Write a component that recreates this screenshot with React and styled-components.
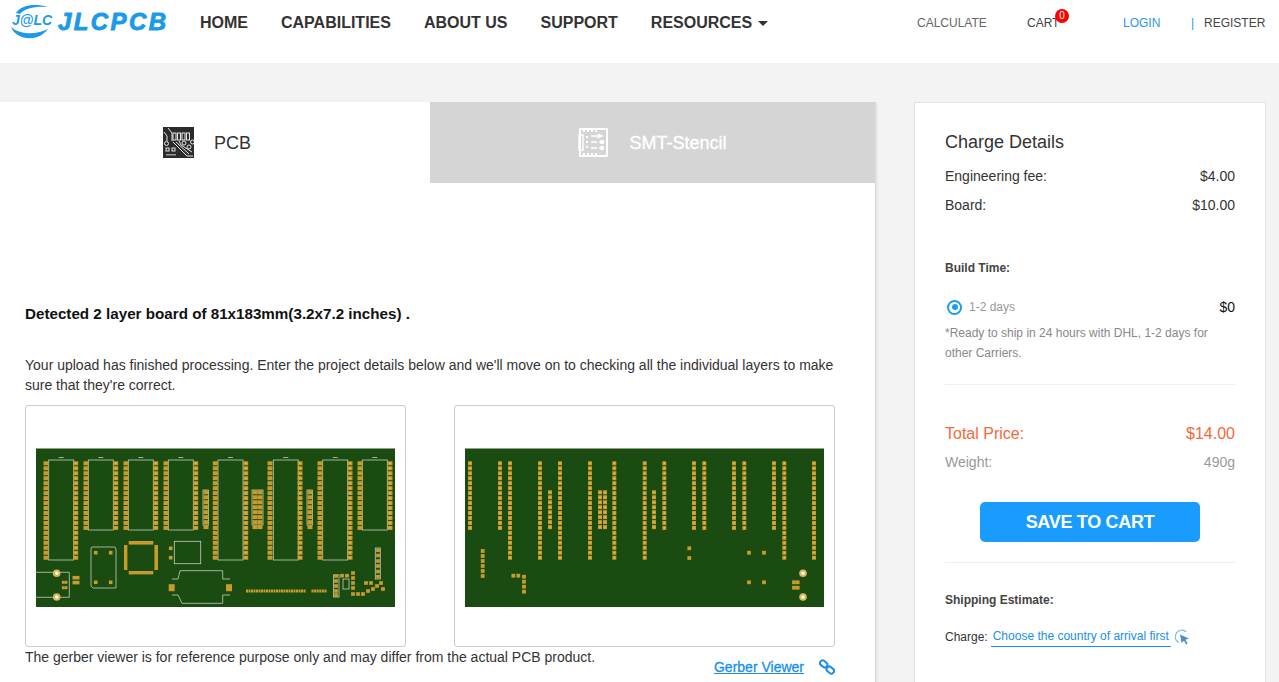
import React from "react";
import styled, { createGlobalStyle } from "styled-components";

const GlobalStyle = createGlobalStyle`
  html, body {
    margin: 0;
    height: 100%;
    overflow: hidden;
    background: #f3f3f3;
    font-family: "Liberation Sans", Arial, sans-serif;
    color: #333;
  }
`;

const range = (n) => Array.from({ length: n }, (_, i) => i);

// board drawing data, coordinates are in board pixels (359x159)
const chips = [
  { silk: 12.7, pads: [10, 39.7], rows: 20 },
  { silk: 52.3, pads: [50, 79.7], rows: 14 },
  { silk: 92.3, pads: [90, 119.7], rows: 14 },
  { silk: 132.3, pads: [130, 159.7], rows: 14 },
  { silk: 182, pads: [179.3, 209.7], rows: 20 },
  { silk: 237.3, pads: [234, 264], rows: 20 },
  { silk: 286.7, pads: [284, 314], rows: 20 },
  { silk: 326.3, pads: [324, 354], rows: 14 },
];
const strips = [170, 219, 224, 274];

const Pad = ({ x, y, w = 5, h = 4, hole }) => (
  <g>
    <rect x={x - w / 2} y={y - h / 2} width={w} height={h} fill="#c99b2c" />
    {hole && <rect x={x - 0.5} y={y - 0.5} width={1} height={1} fill="#efe2a8" />}
  </g>
);

const Mount = ({ x, y }) => (
  <g>
    <circle cx={x} cy={y} r={3.8} fill="#d9b75a" />
    <circle cx={x} cy={y} r={1.7} fill="#fff" />
  </g>
);

const Column = ({ x, rows, start = 15.3, w, h, hole }) =>
  range(rows).map((i) => <Pad key={i} x={x} y={start + i * 4.97} w={w} h={h} hole={hole} />);

const Silk = styled.g`
  fill: none;
  stroke: #c6cdc0;
  stroke-width: 0.8;
`;

const boardPads = [
  [300, 128], [300, 133], [300, 138], [300, 143], [300, 147],
  [306, 127.7], [311, 127.7], [317, 125], [317, 130], [317, 135], [317, 140], [317, 146],
  [322, 146], [327, 146], [332, 143], [337, 141], [330, 135], [335, 135], [341, 138], [345, 135],
  [347, 141], [342, 128.7], [342, 123.5], [342, 118], [342, 113], [342, 107.5], [342, 102.3],
];

const BoardBase = ({ children }) => (
  <svg width="359" height="159" viewBox="0 0 359 159" style={{ display: "block" }}>
    <rect width="359" height="159" fill="#1a4b11" />
    <rect width="359" height="1" fill="#8da386" />
    {children}
  </svg>
);

const TopBoard = () => (
  <BoardBase>
    <Silk>
      {chips.map((c) => (
        <rect key={c.silk} x={c.silk} y={12} width={25} height={c.rows === 20 ? 100 : 70} />
      ))}
      <rect x={167} y={42} width={5.5} height={35} />
      <rect x={216} y={42} width={11} height={35} />
      <rect x={271} y={42} width={5.5} height={35} />
      <path d="M56 99H79L80 101V140H57L55 138V100Z" />
      <rect x={138.3} y={93.3} width={26.4} height={22.4} />
      <path d="M0 124.3H33.3V149.3H0" />
      <path d="M136 131H142L144 122.7H186.7V131H194" />
      <path d="M136 147H142L146 155.3H186.7V147H194" />
      <rect x={297.5} y={127} width={5.5} height={22} />
      <rect x={339.3} y={100} width={5} height={31} />
      <rect x={307} y={131} width={6} height={10} />
      {chips.map((c) => <path key={c.silk} d={`M${c.silk + 10} 9.5h5`} />)}
    </Silk>
    {chips.map((c) =>
      c.pads.map((x, side) => (
        <Column key={x} x={x} rows={c.rows} hole={side === 0 ? false : true} />
      ))
    )}
    {strips.map((x) => (
      <Column key={x} x={x} rows={8} start={44.3} />
    ))}
    <rect x={92.7} y={93} width={24.6} height={3.6} fill="#c99b2c" />
    <rect x={92.7} y={123} width={24.6} height={3.4} fill="#c99b2c" />
    <rect x={88} y={97} width={3.4} height={25} fill="#c99b2c" />
    <rect x={118.4} y={97} width={3.6} height={25} fill="#c99b2c" />
    {[[59.7, 104.7], [74.7, 104.7], [59.7, 134.3], [74.7, 134.3], [134.7, 100.3], [134.7, 109.7]].map(([x, y]) => (
      <Pad key={`${x}-${y}`} x={x} y={y} w={3.6} h={3.6} />
    ))}
    <Mount x={20.7} y={125.3} />
    <Mount x={20.7} y={149} />
    {[[27.3, 134.3], [30, 134.3], [27.3, 139.7], [30, 139.7]].map(([x, y]) => (
      <Pad key={`${x}-${y}`} x={x} y={y} w={2.8} h={3} />
    ))}
    <Pad x={40} y={129.7} w={7} h={3.6} />
    <Pad x={40} y={134.6} w={7} h={3.6} />
    <Pad x={135.7} y={139.7} w={6} h={7} />
    <Pad x={193} y={139.7} w={6} h={7} />
    {range(24).map((i) => <Pad key={i} x={211 + i * 2.5} y={143} w={2} h={3} />)}
    {range(6).map((i) => <Pad key={i} x={276.5 + i * 2.6} y={143} w={2.1} h={3} />)}
    {boardPads.map(([x, y]) => <Pad key={`${x}-${y}`} x={x} y={y} w={3.8} h={3.6} />)}
  </BoardBase>
);

const backPads = [
  ...range(6).map((i) => [17.7, 103 + i * 5]),
  [48.3, 127.7], [53.3, 127.7],
  ...range(4).map((i) => [59, 128.7 + i * 5]),
  [224.3, 100.3], [224.3, 110], [284, 104.7], [299, 104.7], [284, 134.3], [299, 134.3],
  [329, 134.3], [332.7, 134.3], [329, 139.7], [332.7, 139.7],
];

const BackBoard = () => (
  <BoardBase>
    {chips.map((c) =>
      c.pads.map((x) => <Column key={x} x={359 - x} rows={c.rows} w={4} h={4} hole />)
    )}
    {strips.map((x) => (
      <Column key={x} x={359 - x} rows={8} start={44.3} w={4} h={4} hole />
    ))}
    {backPads.map(([x, y]) => <Pad key={`${x}-${y}`} x={x} y={y} w={3.8} h={3.8} />)}
    <Mount x={338} y={125.3} />
    <Mount x={338} y={149} />
  </BoardBase>
);

const LogoMark = () => (
  <svg width="46" height="36" viewBox="0 0 46 36">
    <path d="M6 9C11 1 25 -1 38 3C26 2 15 4 10 10Z" fill="#1a9ae8" />
    <path d="M1 23C6 36 28 39 38 25C28 30 12 32 1 23Z" fill="#1a9ae8" />
    <text x="2" y="21" fontFamily="Liberation Sans" fontWeight="700" fontStyle="italic" fontSize="14" fill="#1a9ae8">J@LC</text>
  </svg>
);

const PcbIcon = () => (
  <svg width="31" height="31" viewBox="0 0 31 31">
    <rect width="31" height="31" fill="#2b2b2b" />
    <g fill="none" stroke="#e6e6e6" strokeWidth="1">
      <path d="M5 1L9 6V14M1 5L4 9V14" />
      <rect x="10" y="6" width="3" height="7" />
      <rect x="14.5" y="6" width="3" height="7" />
      <rect x="19" y="6" width="3" height="7" />
      <rect x="23.5" y="6" width="3" height="7" />
      <circle cx="3.5" cy="16.5" r="2" />
      <circle cx="21" cy="16" r="2" />
      <circle cx="26" cy="20" r="2" />
      <circle cx="29.5" cy="15" r="2" />
      <rect x="3" y="21" width="3" height="3" />
      <rect x="9" y="21" width="3" height="3" />
      <path d="M10 15L24 29H30M13 15L26 27M16 14L18 18L29 25" />
    </g>
    <rect x="3" y="27" width="10" height="1.5" fill="#999" />
  </svg>
);

const StencilIcon = () => (
  <svg width="31" height="31" viewBox="0 0 31 31">
    <path d="M1 1H30V30H1Z M3 3V28H28V3Z" fill="#fff" fillRule="evenodd" />
    <g fill="#fff">
      {[5, 9, 13, 17].map((x) => <rect key={x} x={x} y={1} width={2} height={4} />)}
      {[5, 9, 13, 17].map((x) => <rect key={x} x={x} y={26} width={2} height={4} />)}
    </g>
    <g fill="none" stroke="#fff" strokeWidth="1.4">
      <rect x="1" y="8" width="4" height="15" />
      <path d="M13 9H19M13 15H19M13 21H19M21 9H25M21 15H25M21 21H25" />
      <circle cx="21" cy="9" r="1.5" />
      <circle cx="24" cy="15" r="1.5" />
      <circle cx="24" cy="21" r="1.5" />
    </g>
    <g fill="#fff">
      <rect x="8" y="9" width="2" height="2" />
      <rect x="8" y="14" width="2" height="2" />
      <rect x="8" y="19" width="2" height="2" />
    </g>
  </svg>
);

const LinkIcon = () => (
  <svg width="16" height="16" viewBox="0 0 16 16" fill="none" stroke="#1a8fe8" strokeWidth="2">
    <rect x="0.7" y="2.2" width="8" height="5.4" rx="2.7" transform="rotate(40 4.7 4.9)" />
    <rect x="7.3" y="8.4" width="8" height="5.4" rx="2.7" transform="rotate(40 11.3 11.1)" />
  </svg>
);

const CursorIcon = () => (
  <svg width="16" height="16" viewBox="0 0 16 16">
    <path d="M12.5 3.2A6.6 6.6 0 1 0 4.6 13.6" fill="none" stroke="#7db7ea" strokeWidth="1.2" />
    <path d="M6 5.5L15 9.5L11.5 10.8L13.6 14.4L12 15.4L10 11.8L7.5 14Z" fill="#4d8fd0" />
  </svg>
);

const navItems = ["HOME", "CAPABILITIES", "ABOUT US", "SUPPORT"];

const App = () => (
  <>
    <GlobalStyle />
    <Page>
      <Header>
        <Logo>
          <LogoMark />
          <Brand>JLCPCB</Brand>
        </Logo>
        <Nav>
          {navItems.map((n) => <NavLink key={n}>{n}</NavLink>)}
          <NavLink>RESOURCES<Caret /></NavLink>
        </Nav>
        <Utility>
          <UtilLink $w={110} $muted>CALCULATE</UtilLink>
          <UtilLink $w={96}>
            <CartWrap>CART<Badge>0</Badge></CartWrap>
          </UtilLink>
          <UtilLink $w={68} $blue>LOGIN</UtilLink>
          <Pipe>|</Pipe>
          <UtilLink>REGISTER</UtilLink>
        </Utility>
      </Header>

      <Main>
        <LeftCard>
          <Tabs>
            <Tab $active $w={430}>
              <PcbIcon />
              <TabLabel>PCB</TabLabel>
            </Tab>
            <Tab $w={445}>
              <StencilIcon />
              <TabLabel>SMT-Stencil</TabLabel>
            </Tab>
          </Tabs>
          <Body>
            <Detected>Detected 2 layer board of 81x183mm(3.2x7.2 inches) .</Detected>
            <Intro>
              Your upload has finished processing. Enter the project details below and we'll move on to
              checking all the individual layers to make sure that they're correct.
            </Intro>
            <Previews>
              <Preview><TopBoard /></Preview>
              <Preview><BackBoard /></Preview>
            </Previews>
            <Foot>
              <span>The gerber viewer is for reference purpose only and may differ from the actual PCB product.</span>
              <Viewer>
                <ViewerLink>Gerber Viewer</ViewerLink>
                <LinkIcon />
              </Viewer>
            </Foot>
          </Body>
        </LeftCard>

        <RightCard>
          <CardTitle>Charge Details</CardTitle>
          <FeeRow><span>Engineering fee:</span><span>$4.00</span></FeeRow>
          <FeeRow><span>Board:</span><span>$10.00</span></FeeRow>
          <SubTitle $top={38}>Build Time:</SubTitle>
          <BuildRow>
            <Radio />
            <BuildLabel>1-2 days</BuildLabel>
            <BuildPrice>$0</BuildPrice>
          </BuildRow>
          <Note>*Ready to ship in 24 hours with DHL, 1-2 days for other Carriers.</Note>
          <Divider $top={21} />
          <TotalRow><span>Total Price:</span><span>$14.00</span></TotalRow>
          <WeightRow><span>Weight:</span><span>490g</span></WeightRow>
          <SaveButton>SAVE TO CART</SaveButton>
          <Divider $top={20} />
          <SubTitle $top={27}>Shipping Estimate:</SubTitle>
          <ChargeRow>
            <span>Charge:</span>
            <CountryLink>Choose the country of arrival first</CountryLink>
            <CursorIcon />
          </ChargeRow>
        </RightCard>
      </Main>
    </Page>
  </>
);

const Page = styled.div`
  height: 682px;
  overflow: hidden;
`;

const Header = styled.header`
  height: 63px;
  background: #fff;
  display: flex;
  align-items: flex-start;
  padding-left: 10px;
`;

const Logo = styled.div`
  display: flex;
  align-items: flex-start;
  width: 190px;
  padding-top: 4px;
  gap: 2px;
`;

const Brand = styled.span`
  font-size: 24px;
  font-weight: 700;
  font-style: italic;
  letter-spacing: 2.4px;
  color: #1a9ae8;
  -webkit-text-stroke: 0.9px #1a9ae8;
  line-height: 36px;
`;

const Nav = styled.nav`
  display: flex;
  gap: 33px;
  width: 717px;
`;

const NavLink = styled.a`
  font-size: 16px;
  font-weight: 700;
  color: #333;
  line-height: 45px;
`;

const Caret = styled.i`
  display: inline-block;
  margin-left: 6px;
  vertical-align: 2px;
  border-top: 5px solid #333;
  border-left: 5px solid transparent;
  border-right: 5px solid transparent;
`;

const Utility = styled.div`
  display: flex;
  font-size: 12px;
  line-height: 47px;
`;

const UtilLink = styled.a`
  width: ${(p) => (p.$w ? `${p.$w}px` : "auto")};
  color: ${(p) => (p.$blue ? "#2b95f0" : p.$muted ? "#666" : "#444")};
`;

const Pipe = styled.span`
  color: #2b95f0;
  width: 13px;
`;

const CartWrap = styled.span`
  position: relative;
`;

const Badge = styled.b`
  position: absolute;
  left: 28px;
  top: -7px;
  width: 14px;
  height: 14px;
  border-radius: 50%;
  background: #f00;
  color: #fff;
  font-size: 10px;
  font-weight: 400;
  line-height: 14px;
  text-align: center;
`;

const Main = styled.main`
  display: flex;
  align-items: flex-start;
  gap: 38px;
  padding-top: 39px;
`;

const LeftCard = styled.section`
  width: 875px;
  height: 600px;
  background: #fff;
  border-right: 1px solid #ddd;
  box-shadow: 1px 1px 2px rgba(0, 0, 0, 0.08);
  flex: none;
`;

const Tabs = styled.div`
  display: flex;
  height: 81px;
`;

const Tab = styled.div`
  box-sizing: border-box;
  width: ${(p) => p.$w}px;
  padding-right: ${(p) => (p.$active ? 16 : 0)}px;
  background: ${(p) => (p.$active ? "#fff" : "#d5d5d5")};
  color: ${(p) => (p.$active ? "#333" : "#fff")};
  -webkit-text-stroke: ${(p) => (p.$active ? 0 : 0.3)}px #fff;
  display: flex;
  align-items: center;
  justify-content: center;
  gap: 20px;
`;

const TabLabel = styled.span`
  font-size: 18px;
  position: relative;
  top: 1px;
`;

const Body = styled.div`
  padding: 121px 40px 0 25px;
`;

const Detected = styled.h2`
  margin: 0 0 31px;
  font-size: 15.2px;
  line-height: 20px;
  font-weight: 700;
  color: #111;
`;

const Intro = styled.p`
  margin: 0 0 10px;
  font-size: 14px;
  line-height: 20px;
`;

const Previews = styled.div`
  display: flex;
  justify-content: space-between;
`;

const Preview = styled.div`
  box-sizing: border-box;
  width: 381px;
  height: 242px;
  border: 1px solid #ccc;
  border-radius: 3px;
  padding: 42px 10px 0;
`;

const Foot = styled.div`
  display: flex;
  justify-content: space-between;
  font-size: 14px;
  line-height: 20px;
`;

const Viewer = styled.div`
  display: flex;
  align-items: center;
  gap: 15px;
  margin-top: 10px;
`;

const ViewerLink = styled.a`
  color: #1a8fe8;
  font-weight: 400;
  text-decoration: underline;
  -webkit-text-stroke: 0.3px #1a8fe8;
`;

const RightCard = styled.aside`
  box-sizing: border-box;
  width: 352px;
  height: 600px;
  background: #fff;
  border: 1px solid #e2e2e2;
  padding: 27px 30px 0;
  flex: none;
`;

const CardTitle = styled.h3`
  margin: 0 0 8px;
  font-size: 18px;
  line-height: 24px;
  font-weight: 400;
`;

const FeeRow = styled.div`
  display: flex;
  justify-content: space-between;
  font-size: 14px;
  line-height: 29px;
`;

const SubTitle = styled.h4`
  margin: ${(p) => p.$top}px 0 0;
  font-size: 12px;
  line-height: 20px;
  font-weight: 700;
  color: #444;
`;

const BuildRow = styled.div`
  display: flex;
  align-items: center;
  margin-top: 19px;
  padding-left: 2px;
  height: 20px;
`;

const Radio = styled.i`
  box-sizing: border-box;
  width: 15px;
  height: 15px;
  border: 2px solid #1a9cf0;
  border-radius: 50%;
  position: relative;
  margin-right: 7px;
  &::after {
    content: "";
    position: absolute;
    left: 2.5px;
    top: 2.5px;
    width: 6px;
    height: 6px;
    border-radius: 50%;
    background: #1a9cf0;
  }
`;

const BuildLabel = styled.span`
  flex: 1;
  font-size: 12px;
  color: #999;
`;

const BuildPrice = styled.span`
  font-size: 14px;
  color: #111;
`;

const Note = styled.p`
  margin: 6px 0 0;
  font-size: 12px;
  line-height: 20px;
  color: #888;
`;

const Divider = styled.hr`
  margin: ${(p) => p.$top}px 0 0;
  border: 0;
  border-top: 1px solid #eee;
`;

const TotalRow = styled.div`
  display: flex;
  justify-content: space-between;
  margin-top: 39px;
  font-size: 16px;
  line-height: 20px;
  color: #f5683a;
`;

const WeightRow = styled.div`
  display: flex;
  justify-content: space-between;
  margin-top: 8px;
  font-size: 14px;
  line-height: 20px;
  color: #999;
`;

const SaveButton = styled.button`
  display: block;
  width: 220px;
  height: 40px;
  margin: 30px auto 0;
  border: 0;
  border-radius: 5px;
  background: #1a9cff;
  color: #fff;
  font-family: inherit;
  font-size: 18px;
  font-weight: 700;
  letter-spacing: -0.3px;
`;

const ChargeRow = styled.div`
  display: flex;
  align-items: center;
  gap: 3px;
  margin-top: 17px;
  font-size: 12px;
  line-height: 19px;
`;

const CountryLink = styled.a`
  color: #1a8fe8;
  border-bottom: 1px solid #1a8fe8;
  padding: 0 2px 0 2px;
`;

export default App;
